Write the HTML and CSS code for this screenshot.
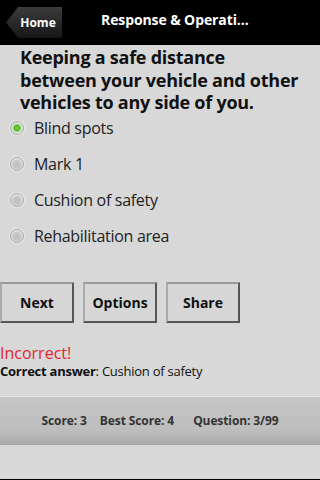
FILE: index.html
```html
<!DOCTYPE html>
<html lang="en">
<head>
    <meta charset="UTF-8">
    <meta name="viewport" content="width=device-width, initial-scale=1.0">
    <title>Response &amp; Operation</title>
    <link rel="stylesheet" href="styles.css">
</head>
<body>
    <div class="screen">
        <div class="title-bar">
            <div class="home-btn">Home</div>
            <div class="title">Response &amp; Operati...</div>
        </div>
        <div class="question">Keeping a safe distance between your vehicle and other vehicles to any side of you.</div>
        <ul class="answers">
            <li class="answer"><span class="radio checked"></span>Blind spots</li>
            <li class="answer"><span class="radio"></span>Mark 1</li>
            <li class="answer"><span class="radio"></span>Cushion of safety</li>
            <li class="answer"><span class="radio"></span>Rehabilitation area</li>
        </ul>
        <div class="buttons">
            <button class="btn">Next</button>
            <button class="btn">Options</button>
            <button class="btn">Share</button>
        </div>
        <div class="result">
            <p class="incorrect">Incorrect!</p>
            <p class="correct"><strong>Correct answer</strong>: Cushion of safety</p>
        </div>
        <div class="score-bar">
            <span>Score: 3</span>
            <span>Best Score: 4</span>
            <span>Question: 3/99</span>
        </div>
    </div>
</body>
</html>
```

FILE: styles.css
```css
body {
    margin: 0;
    font-family: "Open Sans", "DejaVu Sans", sans-serif;
    background-color: #000;
}
.screen {
    height: 479px;
    background-color: #d8d8d8;
    overflow: hidden;
}
.title-bar {
    display: flex;
    align-items: center;
    height: 45px;
    background-color: #000;
    box-sizing: border-box;
    padding: 0 0 6px 6px;
}
.home-btn {
    width: 56px;
    height: 31px;
    margin-top: 6px;
    box-sizing: border-box;
    padding-left: 8px;
    display: flex;
    align-items: center;
    justify-content: center;
    color: #fff;
    font-size: 12px;
    font-weight: bold;
    background: linear-gradient(#3c3c3c, #161616);
    clip-path: polygon(12px 0, 100% 0, 100% 100%, 12px 100%, 0 50%);
}
.title {
    margin-left: 39px;
    color: #fff;
    font-size: 14px;
    font-weight: bold;
    letter-spacing: -0.1px;
}
.question {
    padding: 1px 18px 0 20px;
    font-size: 18px;
    font-weight: bold;
    line-height: 22.5px;
    letter-spacing: -0.25px;
    color: #111;
}
.answers {
    list-style: none;
    margin: -4px 0 0 0;
    padding: 0;
}
.answer {
    display: flex;
    align-items: center;
    height: 36px;
    font-size: 16px;
    letter-spacing: -0.3px;
    color: #222;
}
.radio {
    width: 14px;
    height: 14px;
    margin: 0 10px 0 10px;
    border-radius: 50%;
    border: 1px solid #aaa;
    box-sizing: border-box;
    background: radial-gradient(circle at 50% 55%, #bdbdbd 0, #c8c8c8 45%, #f2f2f2 80%);
    box-shadow: 0 0 0 1px #e8e8e8;
}
.radio.checked {
    background: radial-gradient(circle at 50% 50%, #7ee04a 0, #4cb51c 30%, #b8d8a8 45%, #f2f2f2 80%);
}
.buttons {
    display: flex;
    gap: 9px;
    margin-top: 28px;
}
.btn {
    width: 74px;
    height: 41px;
    font-family: "Open Sans", "DejaVu Sans", sans-serif;
    font-size: 14px;
    font-weight: bold;
    color: #111;
    background-color: #d6d6d6;
    border: 2px solid;
    border-color: #999 #555 #555 #aaa;
    padding: 0;
}
.result {
    margin-top: 22px;
}
.incorrect {
    margin: 0;
    font-size: 16px;
    line-height: 17px;
    color: #e0282f;
}
.correct {
    margin: 0;
    font-size: 13px;
    line-height: 18px;
    letter-spacing: -0.25px;
    color: #111;
}
.score-bar {
    display: flex;
    justify-content: center;
    gap: 13px;
    margin-top: 16px;
    height: 48px;
    align-items: center;
    border-top: 1px solid #e6e6e6;
    background: linear-gradient(#c6c6c6, #bdbdbd 70%, #a9a9a9);
    font-size: 12px;
    font-weight: bold;
    letter-spacing: -0.1px;
    color: #333;
}
.score-bar span:last-child {
    margin-left: 6px;
}
```
